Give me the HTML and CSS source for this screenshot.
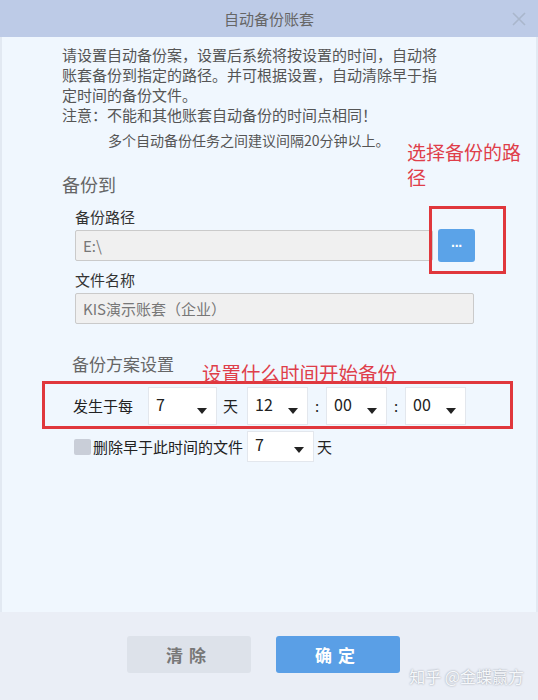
FILE: index.html
```html
<!DOCTYPE html>
<html lang="zh-CN">
<head>
  <meta charset="UTF-8" />
  <meta name="viewport" content="width=device-width, initial-scale=1.0"/>
  <title>自动备份账套</title>
  <link rel="stylesheet" href="styles.css">
</head>
<body>

  <div class="dialog">
    <header class="titlebar">
      <span class="title">自动备份账套</span>
      <svg class="close" width="16" height="16" viewBox="0 0 16 16">
        <path d="M2 2 L14 14 M14 2 L2 14" stroke="#aab7cc" stroke-width="1.6" fill="none"/>
      </svg>
    </header>

    <main class="content">
      <div class="intro">
        <p>请设置自动备份案，设置后系统将按设置的时间，自动将<br>账套备份到指定的路径。并可根据设置，自动清除早于指<br>定时间的备份文件。</p>
        <p>注意：不能和其他账套自动备份的时间点相同！</p>
        <p class="tip">多个自动备份任务之间建议间隔20分钟以上。</p>
      </div>

      <section class="group">
        <h2>备份到</h2>
        <div class="note note-path">选择备份的路径</div>
        <label class="field-label">备份路径</label>
        <div class="path-row">
          <div class="text-box path-box">E:\</div>
          <button class="browse">···</button>
          <div class="mark mark-browse"></div>
        </div>
        <label class="field-label">文件名称</label>
        <div class="text-box name-box">KIS演示账套（企业）</div>
      </section>

      <section class="group plan">
        <h2>备份方案设置</h2>
        <div class="note note-time">设置什么时间开始备份</div>
        <div class="time-row">
          <span class="row-label">发生于每</span>
          <div class="select sel-day">7<i class="arrow"></i></div>
          <span class="unit">天</span>
          <div class="select sel-time">12<i class="arrow"></i></div>
          <span class="colon">:</span>
          <div class="select sel-time">00<i class="arrow"></i></div>
          <span class="colon">:</span>
          <div class="select sel-time">00<i class="arrow"></i></div>
        </div>
        <div class="clean-row">
          <span class="checkbox"></span>
          <span class="clean-label">删除早于此时间的文件</span>
          <div class="select sel-keep">7<i class="arrow"></i></div>
          <span class="unit">天</span>
        </div>
      </section>
    </main>

    <footer class="actions">
      <button class="btn btn-clear">清除</button>
      <button class="btn btn-ok">确定</button>
      <span class="watermark">知乎 @金蝶赢方</span>
    </footer>
  </div>

</body>
</html>
```

FILE: styles.css
```css
body {
  margin: 0;
  font-family: "Noto Sans CJK SC", "Noto Sans", sans-serif;
  background-color: #f0f7fe;
}
.dialog {
  width: 538px;
  height: 700px;
  display: flex;
  flex-direction: column;
}
.titlebar {
  height: 37px;
  background-color: #bdcbe7;
  display: flex;
  align-items: center;
  justify-content: center;
  position: relative;
}
.title {
  font-size: 15px;
  color: #666;
}
.close {
  position: absolute;
  right: 11px;
  top: 11px;
}
.content {
  height: 575px;
  box-sizing: border-box;
  background-color: #f0f7fe;
  border-left: 2px solid #e2e9f2;
  border-right: 2px solid #e2e9f2;
  padding: 8px 0 0 60px;
}
.intro {
  width: 420px;
  font-size: 15px;
  line-height: 20px;
  color: #555;
}
.intro p {
  margin: 0;
}
.intro .tip {
  margin-top: 5px;
  padding-left: 46px;
  font-size: 14px;
}
.group {
  position: relative;
}
.group h2 {
  margin: 22px 0 0;
  font-size: 18px;
  line-height: 24px;
  font-weight: normal;
  color: #666;
}
.field-label {
  display: block;
  margin: 11px 0 0 13px;
  font-size: 15px;
  line-height: 20px;
  color: #333;
}
.path-row {
  display: flex;
  align-items: center;
  margin-top: 2px;
  position: relative;
}
.text-box {
  box-sizing: border-box;
  height: 31px;
  margin-left: 13px;
  padding: 0 7px;
  background-color: #f0f0f0;
  border: 1px solid #cacaca;
  border-radius: 2px;
  font-size: 15px;
  line-height: 29px;
  color: #777;
}
.path-box {
  width: 358px;
}
.browse {
  width: 37px;
  height: 33px;
  margin-left: 5px;
  border: none;
  border-radius: 3px;
  background-color: #5ba3e8;
  color: #fff;
  font-size: 14px;
  font-weight: bold;
  padding: 0;
  letter-spacing: -1px;
}
.name-box {
  width: 399px;
  margin-top: 3px;
}
.path-row + .field-label {
  margin-top: 8px;
}
.mark {
  position: absolute;
  border: 3px solid #e0373c;
}
.mark-browse {
  left: 367px;
  top: -23px;
  width: 71px;
  height: 62px;
}
.note {
  position: absolute;
  color: #df3e4a;
  font-size: 19px;
  line-height: 25px;
}
.note-path {
  left: 345px;
  top: -33px;
  width: 122px;
}
.note-time {
  left: 140px;
  top: 8px;
  font-size: 19.5px;
}
.plan h2 {
  margin-top: 28px;
  margin-left: 10px;
  font-size: 17px;
}
.time-row {
  display: flex;
  align-items: center;
  width: 437px;
  height: 41px;
  margin: 5px 0 0 -20px;
  padding: 1px 0 0 28px;
  border: 3px solid #e0373c;
  box-sizing: content-box;
  font-size: 15px;
  color: #222;
}
.row-label {
  width: 75px;
}
.select {
  position: relative;
  box-sizing: border-box;
  height: 38px;
  padding: 4px 0 0 7px;
  background-color: #fff;
  border: 1px solid #e3e7ed;
  font-size: 16px;
  line-height: 24px;
  color: #222;
}
.arrow {
  position: absolute;
  right: 9px;
  top: 20px;
  width: 0;
  height: 0;
  border-left: 5px solid transparent;
  border-right: 5px solid transparent;
  border-top: 6px solid #222;
}
.sel-day {
  width: 69px;
}
.sel-time {
  width: 61px;
}
.unit {
  margin: 0 9px 0 6px;
}
.colon {
  width: 18px;
  text-align: center;
}
.clean-row {
  display: flex;
  align-items: center;
  margin: 2px 0 0 12px;
  font-size: 15px;
  color: #222;
}
.checkbox {
  width: 17px;
  height: 16px;
  background-color: #c9ced8;
  border-radius: 2px;
}
.clean-label {
  margin-left: 2px;
  margin-right: 4px;
}
.sel-keep {
  width: 67px;
  height: 31px;
  padding-top: 0;
}
.sel-keep .arrow {
  top: 15px;
}
.clean-row .unit {
  margin-left: 3px;
}
.actions {
  flex: 1;
  position: relative;
  background-color: #eaeef6;
  padding: 24px 0 0 127px;
  display: flex;
  align-items: flex-start;
  gap: 25px;
}
.btn {
  width: 124px;
  height: 37px;
  border: none;
  border-radius: 3px;
  font-family: "Noto Sans CJK SC", sans-serif;
  font-size: 17px;
  font-weight: bold;
  letter-spacing: 6px;
  padding-left: 6px;
}
.btn-clear {
  background-color: #dde2ea;
  color: #777;
}
.btn-ok {
  background-color: #5a9fe6;
  color: #fff;
}
.watermark {
  position: absolute;
  right: 14px;
  bottom: 12px;
  font-size: 16px;
  color: #f6f8fb;
  text-shadow: 0 0 2px #8a909a;
}
```
